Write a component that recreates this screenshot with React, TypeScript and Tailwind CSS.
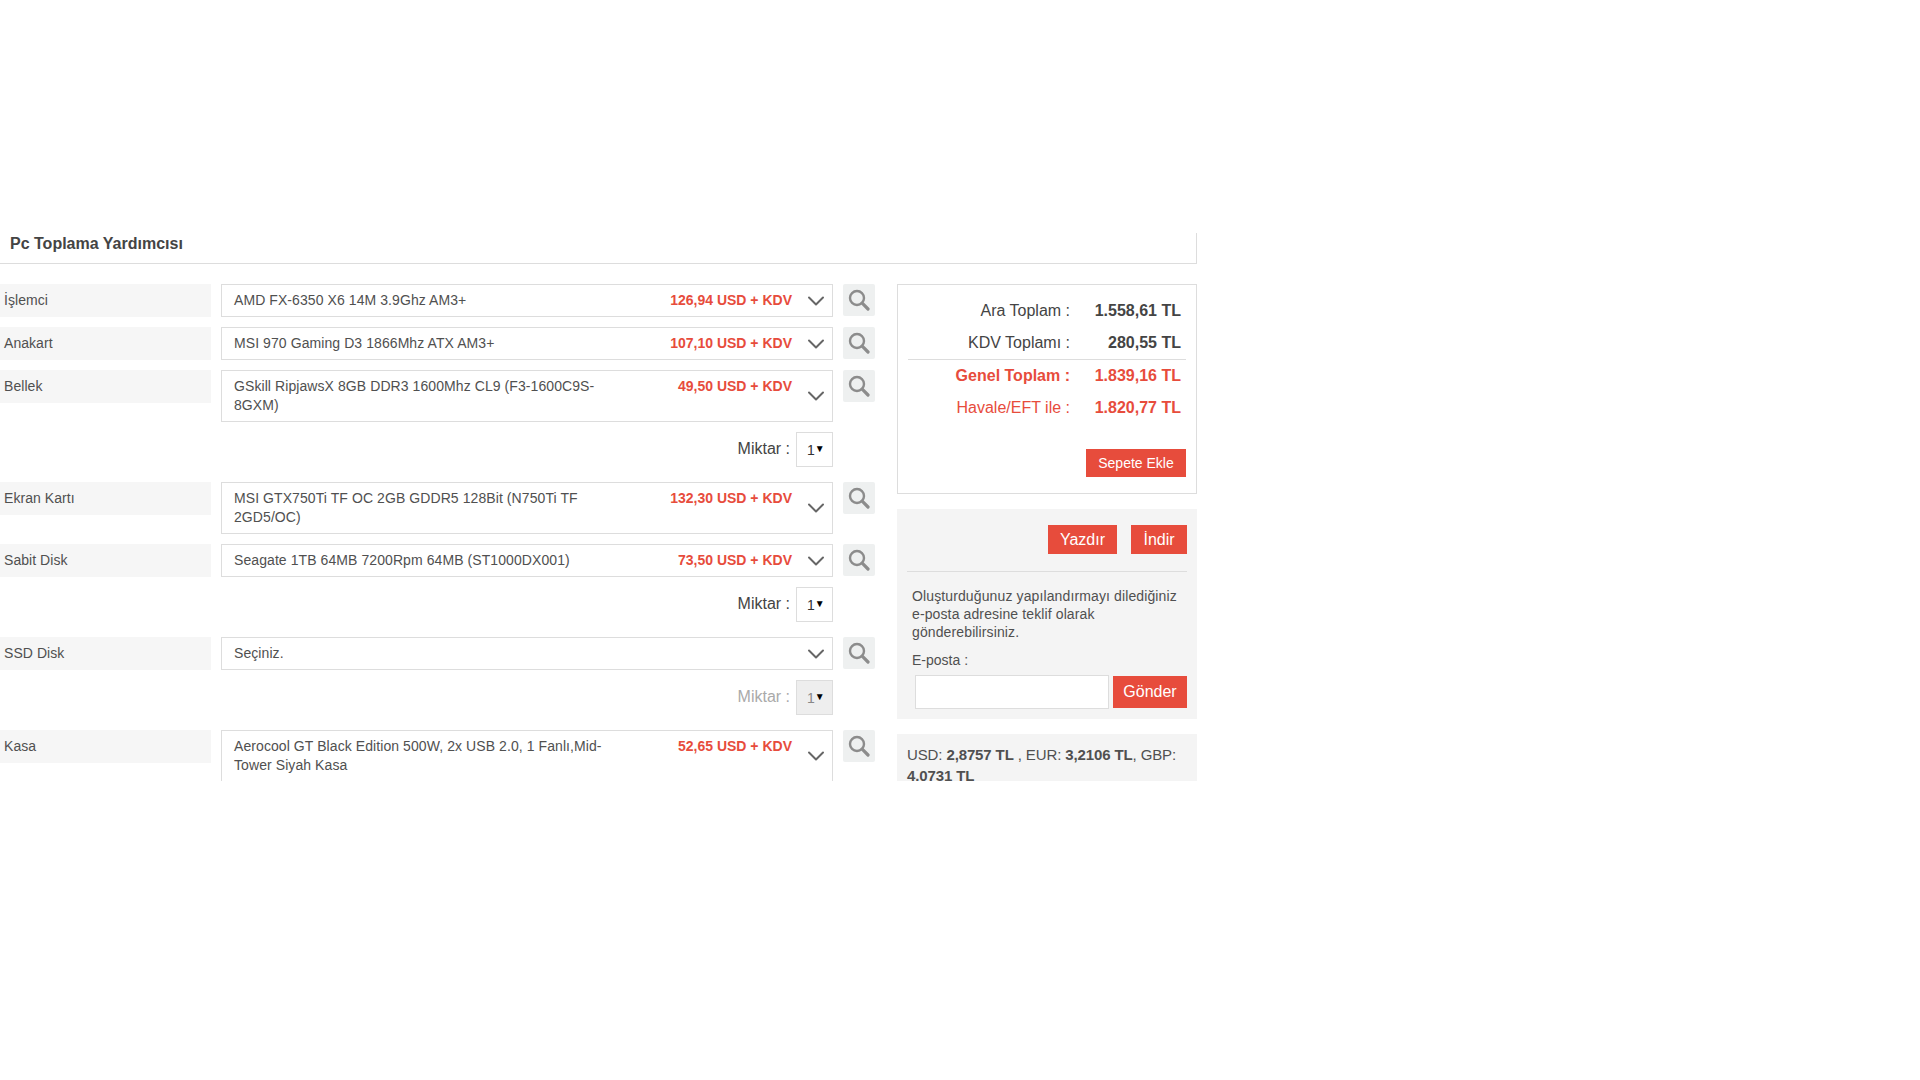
import { ChevronDown } from 'lucide-react';

interface Part {
  label: string;
  name: string;
  price?: string;
  quantity?: 'on' | 'off';
}

const parts: Part[] = [
  { label: 'İşlemci', name: 'AMD FX-6350 X6 14M 3.9Ghz AM3+', price: '126,94 USD + KDV' },
  { label: 'Anakart', name: 'MSI 970 Gaming D3 1866Mhz ATX AM3+', price: '107,10 USD + KDV' },
  { label: 'Bellek', name: 'GSkill RipjawsX 8GB DDR3 1600Mhz CL9 (F3-1600C9S-8GXM)', price: '49,50 USD + KDV', quantity: 'on' },
  { label: 'Ekran Kartı', name: 'MSI GTX750Ti TF OC 2GB GDDR5 128Bit (N750Ti TF 2GD5/OC)', price: '132,30 USD + KDV' },
  { label: 'Sabit Disk', name: 'Seagate 1TB 64MB 7200Rpm 64MB (ST1000DX001)', price: '73,50 USD + KDV', quantity: 'on' },
  { label: 'SSD Disk', name: 'Seçiniz.', quantity: 'off' },
  { label: 'Kasa', name: 'Aerocool GT Black Edition 500W, 2x USB 2.0, 1 Fanlı,Mid-Tower Siyah Kasa', price: '52,65 USD + KDV' },
];

function SearchIcon() {
  return (
    <svg width="22" height="22" viewBox="0 0 22 22" fill="none" stroke="#8c8c8c" strokeWidth="2.4" strokeLinecap="round">
      <circle cx="9" cy="9" r="7" />
      <path d="M14.2 14.2 L20 20" strokeWidth="3.2" />
    </svg>
  );
}

function PartRow({ part }: { part: Part }) {
  return (
    <>
      <div className="flex items-start mb-[10px]">
        <div className="w-[211px] h-[33px] bg-[#f6f6f6] pl-1 leading-[33px] shrink-0 tracking-[0.05px]">{part.label}</div>
        <div className="ml-[10px] w-[612px] shrink-0 border border-[#dddddd] flex items-center pl-3 pr-[2px] min-h-[33px]">
          <div className="w-[396px] py-[6px] leading-[19px] shrink-0 tracking-[0.08px]">{part.name}</div>
          <div className="flex-1 self-start pt-[6px] leading-[19px] text-right font-bold text-[#e74c3c] pr-[10px]">{part.price}</div>
          <ChevronDown size={28} strokeWidth={1.7} className="text-[#666666] shrink-0 -my-1" />
        </div>
        <div className="ml-[10px] w-[32px] h-[32px] bg-[#eef0f0] rounded-[2px] flex items-center justify-center shrink-0">
          <SearchIcon />
        </div>
      </div>
      {part.quantity && <Quantity disabled={part.quantity === 'off'} />}
    </>
  );
}

function Quantity({ disabled }: { disabled: boolean }) {
  return (
    <div className="flex items-center justify-end w-[833px] h-[35px] mb-[15px]">
      <span className={`text-base mr-[6px] -mt-px ${disabled ? 'text-[#aaaaaa]' : 'text-[#444444]'}`}>Miktar :</span>
      <div className={`w-[37px] h-[35px] border border-[#dddddd] flex items-center pl-[10px] ${disabled ? 'bg-[#eeeeee] text-[#888888]' : 'bg-white text-[#333333]'}`}>
        <span className="mt-px">1</span>
        <span className="text-[10px] text-black leading-none -mt-[2px]">▼</span>
      </div>
    </div>
  );
}

function Total({ label, value, className }: { label: string; value: string; className: string }) {
  return (
    <div className={`flex justify-end h-[32px] items-center text-base ${className}`}>
      <span>{label}</span>
      <span className="w-[111px] text-right font-bold">{value}</span>
    </div>
  );
}

export default function App() {
  return (
    <div className="h-[1080px] bg-white text-sm text-[#505050] font-['Liberation_Sans',Arial,sans-serif]">
      <div className="w-[1197px] h-[781px] pt-[233px] overflow-hidden">
        <div className="h-[31px] border-b border-r border-[#dddddd] pl-[10px] text-base font-bold leading-[21px] text-[#444444]">
          Pc Toplama Yardımcısı
        </div>
        <div className="flex mt-5">
          <div className="w-[897px] shrink-0">
            {parts.map((part) => (
              <PartRow key={part.label} part={part} />
            ))}
          </div>
          <div className="w-[300px] shrink-0">
            <div className="h-[210px] border border-[#dddddd] px-[10px] pt-[10px] text-[#444444]">
              <div className="h-[65px] pl-[1px] pr-[5px] border-b border-[#dddddd]">
                <Total label="Ara Toplam :" value="1.558,61 TL" className="" />
                <Total label="KDV Toplamı :" value="280,55 TL" className="" />
              </div>
              <div className="pr-[5px]">
                <Total label="Genel Toplam :" value="1.839,16 TL" className="text-[#e74c3c] font-bold" />
                <Total label="Havale/EFT ile :" value="1.820,77 TL" className="text-[#e74c3c]" />
              </div>
              <div className="flex justify-end mt-[25px]">
                <button className="w-[100px] h-[28px] bg-[#e74c3c] text-white">Sepete Ekle</button>
              </div>
            </div>
            <div className="mt-[15px] h-[210px] bg-[#f4f4f4] pt-4 px-[10px]">
              <div className="flex justify-end gap-[14px] pb-[17px] border-b border-[#dddddd]">
                <button className="w-[69px] h-[29px] bg-[#e74c3c] text-white text-base">Yazdır</button>
                <button className="w-[56px] h-[29px] bg-[#e74c3c] text-white text-base">İndir</button>
              </div>
              <p className="mt-[15px] pl-[5px] leading-[18px] tracking-[0.12px]">
                Oluşturduğunuz yapılandırmayı dilediğiniz e-posta adresine teklif olarak gönderebilirsiniz.
              </p>
              <div className="mt-[10px] pl-[5px] leading-[18px]">E-posta :</div>
              <div className="flex justify-end items-center mt-[6px] gap-1">
                <input className="w-[194px] h-[34px] bg-white border border-[#dddddd]" />
                <button className="w-[74px] h-[32px] bg-[#e74c3c] text-white text-base">Gönder</button>
              </div>
            </div>
            <div className="mt-[15px] bg-[#f4f4f4] px-[10px] pt-[10px] text-[15px] leading-[21px] tracking-[-0.12px] h-[80px]">
              USD: <b>2,8757 TL</b> , EUR: <b>3,2106 TL</b>, GBP: <b>4.0731 TL</b>
            </div>
          </div>
        </div>
      </div>
    </div>
  );
}
